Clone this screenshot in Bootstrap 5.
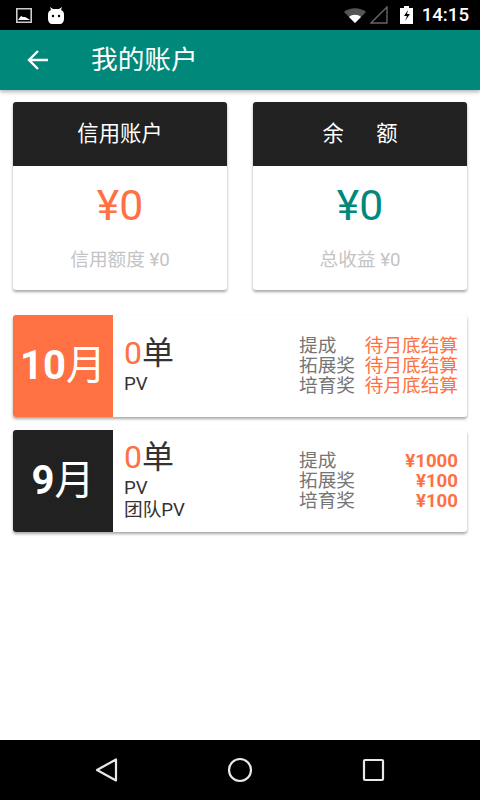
<!DOCTYPE html>
<html lang="zh"><head><meta charset="utf-8">
<link href="https://cdn.jsdelivr.net/npm/bootstrap@5.3.0/dist/css/bootstrap.min.css" rel="stylesheet">
<style>
html,body{height:800px;overflow:hidden;background:#fff}
body{width:480px;font-family:Roboto,"Noto Sans CJK SC",sans-serif;display:flex;flex-direction:column}
.sbar{height:30px;background:#000;color:#fff;padding:0 11px 0 16px}
.sclock{font-size:18.67px;font-weight:500;margin-left:9px}
.tbar{height:60px;background:#00897b;color:#fff;box-shadow:0 2px 4px rgba(0,0,0,.3);padding-left:27px}
.tname{font-size:26.67px;margin-left:42px}
.pagebody{flex:1;padding:12px 13px 0}
.acct{width:214px;height:188px;background:#fff;border-radius:3px;box-shadow:0 2px 3px rgba(0,0,0,.35);overflow:hidden}
.acct-h{height:64px;background:#212121;color:#fff;font-size:21.33px}
.acct-v{font-size:42.67px;line-height:50px;margin-top:14px}
.acct-s{font-size:18.67px;line-height:24px;color:#c4c4c4;margin-top:18px}
.orng{color:#ff7043}.teal{color:#00897b}
.acct-gap{margin-top:25px}
.mrow{background:#fff;border-radius:3px;box-shadow:0 2px 3px rgba(0,0,0,.35);height:102px;overflow:hidden}
.mrow+.mrow{margin-top:13px}
.mth{width:100px;color:#fff;font-size:40px;font-weight:700}
.mth span{font-weight:400}
.bg-o{background:#ff7043}.bg-k{background:#212121}
.mid{padding:0 0 3px 11px;width:175px;color:#333;font-size:18.67px;line-height:22px}
.cnt{font-size:32px;line-height:36px;margin-bottom:2px}
.side{flex:1;padding:0 9px 0 11px;font-size:18.67px;line-height:20px;color:#757575}
.side b{font-weight:700}
.nbar{height:60px;background:#000}
.bat{margin-left:12px}
</style></head><body>
<div class="sbar d-flex align-items-center">
<svg width="16" height="15" viewBox="0 0 16 15"><path d="M.8.8h14.4v13.4H.8z" fill="none" stroke="#ccc" stroke-width="1.6"/><path d="M2 12l3-4 2 1 2 0 2 1 3 2z" fill="#fff"/></svg>
<svg class="ms-3" width="16" height="17" viewBox="0 0 16 17"><path d="M0 8c0-3 1-4 3-5L2 0l3 2h6l3-2-1 3c2 1 3 2 3 5v4c0 3-2 5-4 5H4c-2 0-4-2-4-5z" fill="#fff"/><circle cx="5" cy="9" r="1.2" fill="#000"/><circle cx="11" cy="9" r="1.2" fill="#000"/></svg>
<div class="ms-auto d-flex align-items-center">
<svg width="22" height="15" viewBox="0 0 22 15"><path d="M0 4C6-1 16-1 22 4L11 15z" fill="#555"/><path d="M5 9c3-3 9-3 12 0l-6 6z" fill="#fff"/></svg>
<svg class="ms-1" width="18" height="18" viewBox="0 0 18 18"><path d="M17 1v16H1z" fill="none" stroke="#666" stroke-width="1.4"/></svg>
<svg class="bat" width="13" height="18" viewBox="0 0 13 18"><path d="M4 0h5v2h4v16H0V2h4z" fill="#fff"/><path d="M8 4L4 10h3l-2 5 5-7H7z" fill="#000"/></svg>
<span class="sclock">14:15</span></div>
</div>
<div class="tbar d-flex align-items-center">
<svg width="22" height="22" viewBox="0 0 22 22"><path d="M21 11H2M11 2l-9 9 9 9" fill="none" stroke="#fff" stroke-width="2.4"/></svg>
<span class="tname">我的账户</span>
</div>
<div class="pagebody">
<div class="d-flex justify-content-between" style="width:454px">
<div class="acct text-center"><div class="acct-h d-flex align-items-center justify-content-center">信用账户</div><div class="acct-v orng">¥0</div><div class="acct-s">信用额度 ¥0</div></div>
<div class="acct text-center"><div class="acct-h d-flex align-items-center justify-content-center">余&emsp;&nbsp;&nbsp;额</div><div class="acct-v teal">¥0</div><div class="acct-s">总收益 ¥0</div></div>
</div>
<div class="acct-gap">
<div class="mrow d-flex"><div class="mth bg-o d-flex align-items-center justify-content-center">10<span>月</span></div>
<div class="mid align-self-center"><div class="cnt"><span class="orng">0</span>单</div><div>PV</div></div>
<div class="side align-self-center"><div class="d-flex justify-content-between"><span>提成</span><span class="orng">待月底结算</span></div><div class="d-flex justify-content-between"><span>拓展奖</span><span class="orng">待月底结算</span></div><div class="d-flex justify-content-between"><span>培育奖</span><span class="orng">待月底结算</span></div></div></div>
<div class="mrow d-flex"><div class="mth bg-k d-flex align-items-center justify-content-center">9<span>月</span></div>
<div class="mid align-self-center"><div class="cnt"><span class="orng">0</span>单</div><div>PV</div><div>团队PV</div></div>
<div class="side align-self-center"><div class="d-flex justify-content-between"><span>提成</span><b class="orng">¥1000</b></div><div class="d-flex justify-content-between"><span>拓展奖</span><b class="orng">¥100</b></div><div class="d-flex justify-content-between"><span>培育奖</span><b class="orng">¥100</b></div></div></div>
</div>
</div>
<div class="nbar d-flex align-items-center justify-content-center">
<svg width="300" height="30" viewBox="0 0 300 30"><path d="M7 15L26 4.500v21z" fill="none" stroke="#e8e8e8" stroke-width="2.200" stroke-linejoin="round"/><circle cx="150" cy="15" r="11" fill="none" stroke="#e8e8e8" stroke-width="2.200"/><rect x="274" y="5" width="19" height="20" rx="1" fill="none" stroke="#e8e8e8" stroke-width="2.200"/></svg>
</div>
<script src="https://cdn.jsdelivr.net/npm/bootstrap@5.3.0/dist/js/bootstrap.bundle.min.js"></script>
</body></html>
